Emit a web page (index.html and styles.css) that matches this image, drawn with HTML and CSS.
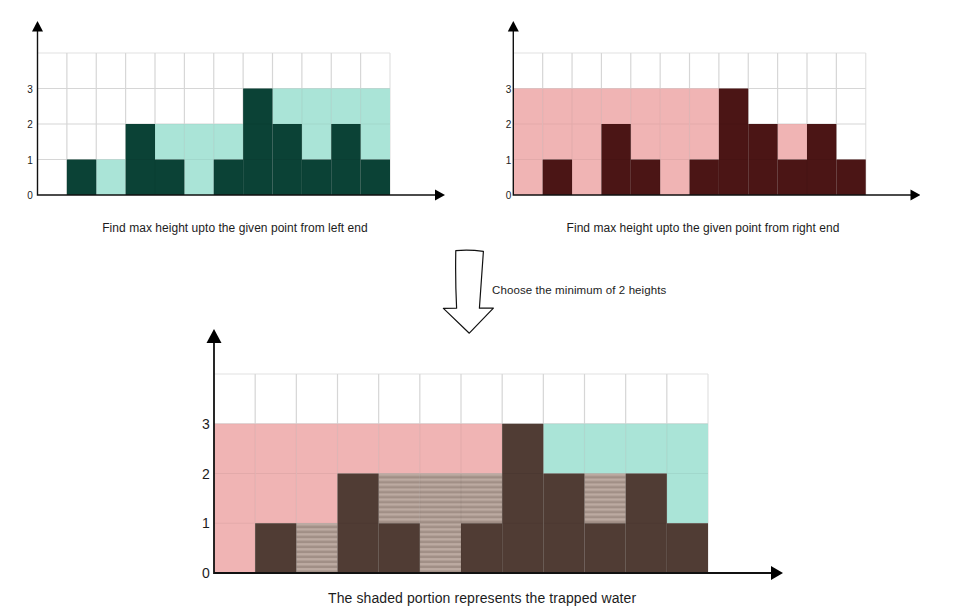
FILE: index.html
```html
<!DOCTYPE html>
<html lang="en">
<head>
<meta charset="utf-8">
<title>Trapping rain water</title>
<link rel="stylesheet" href="styles.css">
</head>
<body>
<div class="top">
  <figure class="fig">
    <svg class="chart-sm" viewBox="18 10 434 204" xmlns="http://www.w3.org/2000/svg">
      <g transform="translate(37.5 53) scale(29.375 35.5)">
        <path class="grid" d="M0 0H12M0 1H12M0 2H12M0 3H12M1 0V4M2 0V4M3 0V4M4 0V4M5 0V4M6 0V4M7 0V4M8 0V4M9 0V4M10 0V4M11 0V4M12 0V4"/>
        <g class="teal">
          <rect x="2" y="3" width="1" height="1"/>
          <rect x="4" y="2" width="1" height="1"/>
          <rect x="5" y="2" width="1" height="2"/>
          <rect x="6" y="2" width="1" height="1"/>
          <rect x="8" y="1" width="1" height="1"/>
          <rect x="9" y="1" width="1" height="2"/>
          <rect x="10" y="1" width="1" height="1"/>
          <rect x="11" y="1" width="1" height="2"/>
        </g>
        <g class="green">
          <rect x="1" y="3" width="1" height="1"/>
          <rect x="3" y="2" width="1" height="2"/>
          <rect x="4" y="3" width="1" height="1"/>
          <rect x="6" y="3" width="1" height="1"/>
          <rect x="7" y="1" width="1" height="3"/>
          <rect x="8" y="2" width="1" height="2"/>
          <rect x="9" y="3" width="1" height="1"/>
          <rect x="10" y="2" width="1" height="2"/>
          <rect x="11" y="3" width="1" height="1"/>
        </g>
        <path class="grid-over" d="M0 1H12M0 2H12M0 3H12M1 0V4M2 0V4M3 0V4M4 0V4M5 0V4M6 0V4M7 0V4M8 0V4M9 0V4M10 0V4M11 0V4"/>
      </g>
      <path class="axis" d="M37.5 30V195H436"/>
      <path class="head" d="M37.5 21L43 31.5H32Z"/>
      <path class="head" d="M445 195L435 189.5V200.5Z"/>
      <g class="lbl-sm">
        <text x="30" y="89">3</text>
        <text x="30" y="124.5">2</text>
        <text x="30" y="160">1</text>
        <text x="30" y="195">0</text>
      </g>
    </svg>
    <p class="cap-sm">Find max height upto the given point from left end</p>
  </figure>
  <figure class="fig">
    <svg class="chart-sm" viewBox="486 10 434 204" xmlns="http://www.w3.org/2000/svg">
      <g transform="translate(513.3 53) scale(29.37 35.5)">
        <path class="grid" d="M0 0H12M0 1H12M0 2H12M0 3H12M1 0V4M2 0V4M3 0V4M4 0V4M5 0V4M6 0V4M7 0V4M8 0V4M9 0V4M10 0V4M11 0V4M12 0V4"/>
        <g class="pink">
          <rect x="0" y="1" width="1" height="3"/>
          <rect x="1" y="1" width="1" height="2"/>
          <rect x="2" y="1" width="1" height="3"/>
          <rect x="3" y="1" width="1" height="1"/>
          <rect x="4" y="1" width="1" height="2"/>
          <rect x="5" y="1" width="1" height="3"/>
          <rect x="6" y="1" width="1" height="2"/>
          <rect x="9" y="2" width="1" height="1"/>
        </g>
        <g class="maroon">
          <rect x="1" y="3" width="1" height="1"/>
          <rect x="3" y="2" width="1" height="2"/>
          <rect x="4" y="3" width="1" height="1"/>
          <rect x="6" y="3" width="1" height="1"/>
          <rect x="7" y="1" width="1" height="3"/>
          <rect x="8" y="2" width="1" height="2"/>
          <rect x="9" y="3" width="1" height="1"/>
          <rect x="10" y="2" width="1" height="2"/>
          <rect x="11" y="3" width="1" height="1"/>
        </g>
        <path class="grid-over" d="M0 1H12M0 2H12M0 3H12M1 0V4M2 0V4M3 0V4M4 0V4M5 0V4M6 0V4M7 0V4M8 0V4M9 0V4M10 0V4M11 0V4"/>
      </g>
      <path class="axis" d="M513.3 30V195H911"/>
      <path class="head" d="M513.3 21L518.8 31.5H507.8Z"/>
      <path class="head" d="M920.5 195L910.5 189.5V200.5Z"/>
      <g class="lbl-sm">
        <text x="508.5" y="89">3</text>
        <text x="508.5" y="124.5">2</text>
        <text x="508.5" y="160">1</text>
        <text x="508.5" y="195">0</text>
      </g>
    </svg>
    <p class="cap-sm">Find max height upto the given point from right end</p>
  </figure>
</div>

<div class="mid">
  <svg class="arrow" viewBox="443 250 52 86" xmlns="http://www.w3.org/2000/svg">
    <path class="hand" d="M455.8 250.6Q469 249.2 483.4 251.4L479.4 308.2L493.4 308.2L469.3 333.2L443.4 308.4L456.6 308.2Q455.2 280 455.8 250.6Z"/>
  </svg>
  <p class="mid-text">Choose the minimum of 2 heights</p>
</div>

<div class="bottom">
  <svg class="chart-lg" viewBox="190 326 600 256" xmlns="http://www.w3.org/2000/svg">
    <defs>
      <pattern id="water" patternUnits="userSpaceOnUse" width="1" height="0.1">
        <rect width="1" height="0.1" fill="#bcaaa1"/>
        <rect y="0.05" width="1" height="0.05" fill="#a18f86"/>
      </pattern>
    </defs>
    <g transform="translate(214 374) scale(41.1667 49.75)">
      <path class="grid" d="M0 0H12M0 1H12M0 2H12M0 3H12M1 0V4M2 0V4M3 0V4M4 0V4M5 0V4M6 0V4M7 0V4M8 0V4M9 0V4M10 0V4M11 0V4M12 0V4"/>
      <g class="pink">
        <rect x="0" y="1" width="1" height="3"/>
        <rect x="1" y="1" width="1" height="2"/>
        <rect x="2" y="1" width="1" height="2"/>
        <rect x="3" y="1" width="1" height="1"/>
        <rect x="4" y="1" width="1" height="1"/>
        <rect x="5" y="1" width="1" height="1"/>
        <rect x="6" y="1" width="1" height="1"/>
      </g>
      <g class="teal">
        <rect x="8" y="1" width="1" height="1"/>
        <rect x="9" y="1" width="1" height="1"/>
        <rect x="10" y="1" width="1" height="1"/>
        <rect x="11" y="1" width="1" height="2"/>
      </g>
      <g fill="url(#water)">
        <rect x="2" y="3" width="1" height="1"/>
        <rect x="4" y="2" width="1" height="1"/>
        <rect x="5" y="2" width="1" height="2"/>
        <rect x="6" y="2" width="1" height="1"/>
        <rect x="9" y="2" width="1" height="1"/>
      </g>
      <g class="brown">
        <rect x="1" y="3" width="1" height="1"/>
        <rect x="3" y="2" width="1" height="2"/>
        <rect x="4" y="3" width="1" height="1"/>
        <rect x="6" y="3" width="1" height="1"/>
        <rect x="7" y="1" width="1" height="3"/>
        <rect x="8" y="2" width="1" height="2"/>
        <rect x="9" y="3" width="1" height="1"/>
        <rect x="10" y="2" width="1" height="2"/>
        <rect x="11" y="3" width="1" height="1"/>
      </g>
      <path class="grid-over" d="M0 1H12M0 2H12M0 3H12M1 0V4M2 0V4M3 0V4M4 0V4M5 0V4M6 0V4M7 0V4M8 0V4M9 0V4M10 0V4M11 0V4"/>
    </g>
    <path class="axis axis-lg" d="M214 340V573H772"/>
    <path class="head" d="M214 329L221.5 343H206.5Z"/>
    <path class="head" d="M783 573L771 566V580Z"/>
    <g class="lbl-lg">
      <text x="206" y="424">3</text>
      <text x="206" y="474">2</text>
      <text x="206" y="523">1</text>
      <text x="206" y="573">0</text>
    </g>
  </svg>
  <p class="cap-lg">The shaded portion represents the trapped water</p>
</div>
</body>
</html>
```

FILE: styles.css
```css
html, body {
  margin: 0;
  background: #ffffff;
}

body {
  width: 972px;
  height: 616px;
  overflow: hidden;
  font-family: "Liberation Sans", Arial, sans-serif;
  color: #1c1c1c;
}

.top {
  display: flex;
  gap: 34px;
  padding: 10px 0 0 18px;
}

.fig {
  margin: 0;
  width: 434px;
  display: flex;
  flex-direction: column;
  align-items: center;
}

.chart-sm {
  display: block;
  width: 434px;
  height: 204px;
}

.cap-sm {
  margin: 7px 0 0;
  font-size: 12px;
  line-height: 14px;
  letter-spacing: 0.04px;
}

.mid {
  display: flex;
  height: 76px;
  margin-top: 15px;
  padding-left: 443px;
}

.arrow {
  flex: none;
  width: 52px;
  height: 86px;
  overflow: visible;
}

.mid-text {
  margin: 33px 0 0 -3px;
  font-size: 11.5px;
  line-height: 14px;
  letter-spacing: 0.1px;
}

.bottom {
  padding-left: 190px;
}

.chart-lg {
  display: block;
  width: 600px;
  height: 256px;
}

.cap-lg {
  margin: 8px 0 0 138px;
  font-size: 14px;
  line-height: 16px;
  letter-spacing: 0.1px;
}

/* chart parts */
.grid {
  fill: none;
  stroke: #e2e2e2;
  stroke-width: 1.2;
  vector-effect: non-scaling-stroke;
}

.grid-over {
  fill: none;
  stroke: rgba(0, 0, 0, 0.05);
  stroke-width: 1.2;
  vector-effect: non-scaling-stroke;
}

.teal { fill: #aae4d7; }
.green { fill: #0b4236; }
.pink { fill: #f0b4b4; }
.maroon { fill: #4b1515; }
.brown { fill: #503c34; }

.axis {
  fill: none;
  stroke: #111111;
  stroke-width: 1.4;
}

.axis-lg {
  stroke-width: 1.8;
}

.head {
  fill: #000000;
}

.hand {
  fill: #ffffff;
  stroke: #111111;
  stroke-width: 1.2;
  stroke-linejoin: round;
}

.lbl-sm text,
.lbl-lg text {
  text-anchor: middle;
  dominant-baseline: central;
  fill: #1c1c1c;
  font-family: "Liberation Sans", Arial, sans-serif;
}

.lbl-sm text {
  font-size: 10px;
}

.lbl-lg text {
  font-size: 14px;
}
```
